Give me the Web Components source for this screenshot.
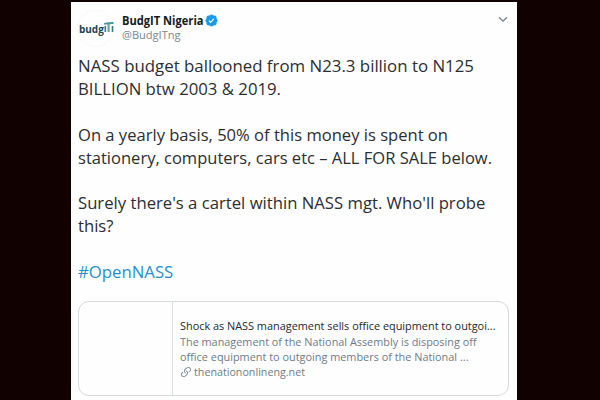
<!DOCTYPE html>
<html lang="en">
<head>
<meta charset="utf-8">
<title>BudgIT Nigeria</title>
<style>
html,body{margin:0;height:100%;overflow:hidden;background:#110101;font-family:"Open Sans","Noto Sans",sans-serif}
</style>
</head>
<body>
<tweet-page></tweet-page>
<script>
const define = (name, html, ready) => {
  const t = document.createElement('template');
  t.innerHTML = html;
  customElements.define(name, class extends HTMLElement {
    constructor() {
      super();
      this.attachShadow({mode: 'open'}).append(t.content.cloneNode(true));
    }
    connectedCallback() { if (ready) ready(this); }
  });
};

/* One line of text, condensed to the width given in its "width" attribute. */
define('fit-line', `<style>
:host{display:block;white-space:nowrap;height:var(--lh);line-height:var(--lh)}
span{display:inline-block;transform-origin:0 50%}
</style><span><slot></slot></span>`, el => {
  const s = el.shadowRoot.querySelector('span');
  const w = s.offsetWidth ? s.getBoundingClientRect().width : 0;
  if (w) s.style.transform = 'scaleX(' + (+el.getAttribute('width') / w) + ')';
});

define('verified-badge', `<style>:host{display:block;width:13px;height:13px}svg{display:block}</style>
<svg width="13" height="13" viewBox="0 0 26 26"><g fill="#1d9bea"><circle cx="13" cy="5.5" r="4.6"/><circle cx="13" cy="20.5" r="4.6"/><circle cx="5.5" cy="13" r="4.6"/><circle cx="20.5" cy="13" r="4.6"/><circle cx="7.4" cy="7.4" r="4.6"/><circle cx="18.6" cy="7.4" r="4.6"/><circle cx="7.4" cy="18.6" r="4.6"/><circle cx="18.6" cy="18.6" r="4.6"/><circle cx="13" cy="13" r="8"/></g><path d="M8 13.4l3.4 3.5 6.2-7.4" fill="none" stroke="#fff" stroke-width="2.3"/></svg>`);

define('budgit-avatar', `<style>
:host{display:flex;box-sizing:border-box;width:37px;height:37px;border-radius:50%;border:1px solid #f8f9f9;align-items:center;color:#1b4650;font:700 11.2px/14px "Open Sans",sans-serif}
fit-line{--lh:14px;width:25px;flex:none;margin-left:1px}
svg{display:block;flex:none;margin-top:-3px}
</style><fit-line width="24.8">budg</fit-line>
<svg width="10" height="11" viewBox="0 0 10 11"><path d="M.2 2Q4 1 9.6 1" fill="none" stroke="#4a9995" stroke-width="1.8"/><path d="M1.3 4V10" stroke="#367f80" stroke-width="1.6"/><path d="M4.6 2V10" stroke="#65aaa7" stroke-width="2.2"/><path d="M8.5 4V10" stroke="#367f80" stroke-width="1.6"/></svg>`);

define('tweet-header', `<style>
:host{display:flex;height:37px}
.id{margin:2.5px 0 0 7.5px;flex:1}
.name{display:flex;height:15px;align-items:center;font-weight:700;font-size:11.5px;color:#161b20;--lh:15px}
.name fit-line{width:83.2px}
.handle{font-size:11.4px;color:#7b8790;--lh:14.6px}
.caret{display:block;margin:5.6px .6px 0 0}
</style><budgit-avatar></budgit-avatar>
<div class="id"><div class="name"><fit-line width="81.5">BudgIT Nigeria</fit-line><verified-badge></verified-badge></div>
<fit-line class="handle" width="58.5">@BudgITng</fit-line></div>
<svg class="caret" width="10" height="7" viewBox="0 0 10 7"><path d="M1 1.2L5 5.1 9 1.2" fill="none" stroke="#77818a" stroke-width="1.2"/></svg>`);

define('tweet-body', `<style>
:host{display:block;--lh:22.8px;font-size:16.6px;color:#2b2e31}
.gap{height:22.8px}.tag{color:#2590cc}
</style>
<fit-line width="396">NASS budget ballooned from N23.3 billion to N125</fit-line>
<fit-line width="203">BILLION btw 2003 &amp; 2019.</fit-line>
<div class="gap"></div>
<fit-line width="370">On a yearly basis, 50% of this money is spent on</fit-line>
<fit-line width="414">stationery, computers, cars etc – ALL FOR SALE below.</fit-line>
<div class="gap"></div>
<fit-line width="407.3">Surely there's a cartel within NASS mgt. Who'll probe</fit-line>
<fit-line width="35.5">this?</fit-line>
<div class="gap"></div>
<fit-line class="tag" width="95.3">#OpenNASS</fit-line>`);

define('link-card', `<style>
:host{display:flex;box-sizing:border-box;height:95px;border:1px solid #d4d9dc;border-radius:11px;font-size:11.3px;color:#6e7b85}
.thumb{width:93px;border-right:1px solid #d9dee1}
.text{padding:17px 0 0 7.2px;--lh:14.6px}
.title{color:#23282c;margin-bottom:1.4px}
.src{display:flex;align-items:center;gap:2.2px;margin-top:.8px}
svg{display:block}
</style><div class="thumb"></div><div class="text">
<fit-line class="title" width="315.5">Shock as NASS management sells office equipment to outgoi...</fit-line>
<fit-line width="296.5">The management of the National Assembly is disposing off</fit-line>
<fit-line width="288.5">office equipment to outgoing members of the National ...</fit-line>
<div class="src"><svg width="12" height="12" viewBox="0 0 24 24" fill="#6e7b85"><path d="M11.96 14.945c-.067 0-.136-.01-.203-.027-1.13-.318-2.097-.986-2.795-1.932-.832-1.125-1.176-2.508-.968-3.893s.942-2.605 2.068-3.438l3.53-2.608c2.322-1.716 5.61-1.224 7.33 1.1.83 1.127 1.175 2.51.967 3.895s-.943 2.605-2.07 3.438l-1.48 1.094c-.333.246-.804.175-1.05-.158-.246-.334-.176-.804.158-1.05l1.48-1.095c.803-.592 1.327-1.463 1.476-2.45.148-.988-.098-1.975-.69-2.778-1.225-1.656-3.572-2.01-5.23-.784l-3.53 2.608c-.802.593-1.326 1.464-1.475 2.45-.15.99.097 1.975.69 2.778.498.675 1.187 1.15 1.992 1.377.4.114.633.528.52.928-.092.33-.394.547-.722.547z"/><path d="M7.27 22.054c-1.61 0-3.197-.735-4.225-2.125-.832-1.127-1.176-2.51-.968-3.894s.943-2.605 2.07-3.438l1.478-1.094c.334-.245.805-.175 1.05.158s.177.804-.157 1.05l-1.48 1.095c-.803.593-1.326 1.464-1.475 2.45-.148.99.097 1.975.69 2.778 1.225 1.657 3.57 2.01 5.23.785l3.528-2.608c1.658-1.225 2.01-3.57.785-5.23-.498-.674-1.187-1.15-1.992-1.376-.4-.113-.633-.527-.52-.927.112-.4.528-.63.926-.522 1.13.318 2.096.986 2.794 1.932 1.717 2.324 1.224 5.612-1.1 7.33l-3.53 2.608c-.933.693-2.023 1.026-3.105 1.026z"/></svg><fit-line width="111">thenationonlineng.net</fit-line></div>
</div>`);

define('tweet-page', `<style>
:host{display:block;box-sizing:border-box;width:600px;height:400px;padding-top:2px;background:#110101}
main{display:block;box-sizing:border-box;width:446px;height:398px;margin-left:71px;background:#fefefe;padding:8px 8px 0 6px}
tweet-body{margin:8.4px 0 0 .6px}
link-card{margin-top:17.6px;width:431px;margin-left:.6px}
</style><main><tweet-header></tweet-header><tweet-body></tweet-body><link-card></link-card></main>`);
</script>
</body>
</html>
